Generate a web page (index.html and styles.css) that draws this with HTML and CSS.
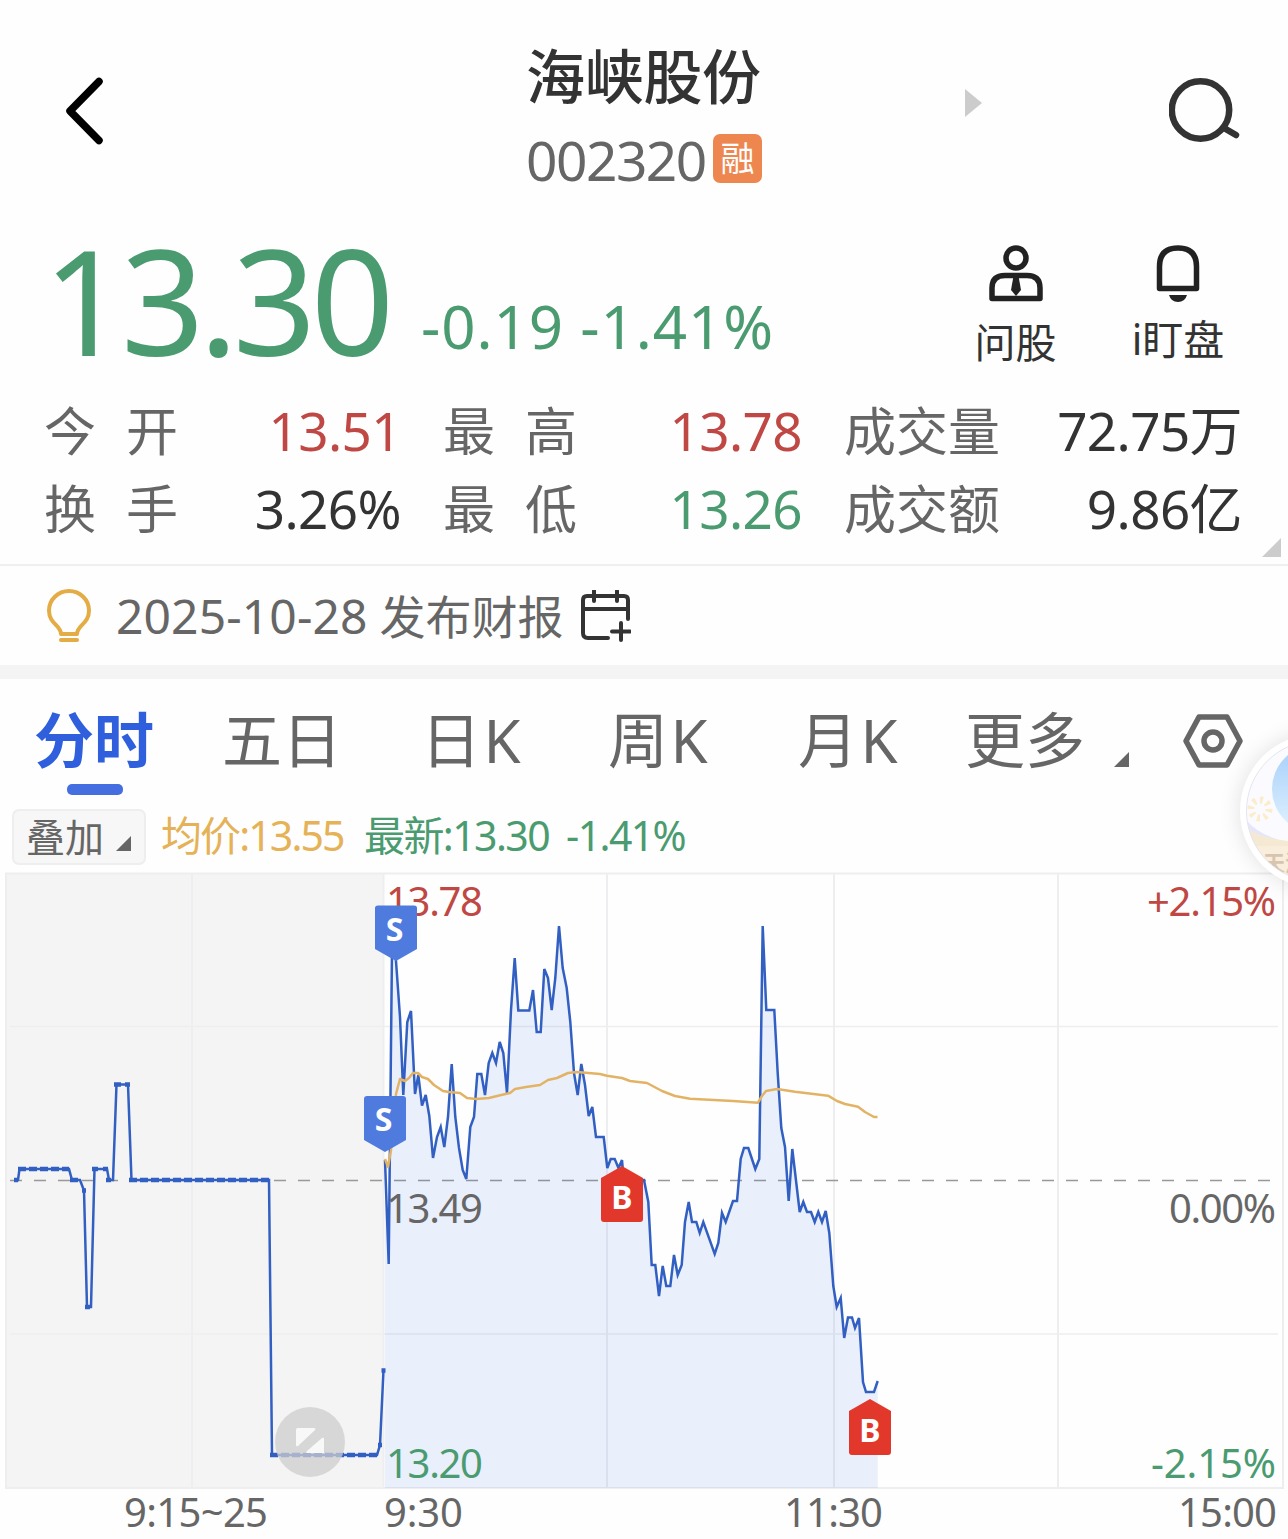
FILE: index.html
```html
<!DOCTYPE html>
<html lang="zh">
<head>
    <meta charset="UTF-8">
    <meta name="viewport" content="width=device-width, initial-scale=1.0">
    <title>海峡股份 002320</title>
    <link rel="stylesheet" href="styles.css">
</head>
<body>
    <!-- 顶部导航 -->
    <header class="header">
        <svg class="back" width="44" height="72" viewBox="0 0 44 72">
            <path d="M36 6.500 L7 36 L36 65.500"/>
        </svg>
        <div class="stock">
            <h1>海峡股份</h1>
            <div class="code"><span>002320</span><i class="badge">融</i></div>
        </div>
        <svg class="next" width="18" height="28" viewBox="0 0 18 28"><path d="M0 0 L17 14 L0 28 Z"/></svg>
        <svg class="search" width="72" height="66" viewBox="0 0 72 66">
            <circle cx="31.5" cy="32" r="28.7"/>
            <path d="M55 50 L67 57"/>
        </svg>
    </header>

    <!-- 价格 -->
    <section class="quote">
        <div class="price">13.30</div>
        <div class="change">-0.19 -1.41%</div>
        <div class="action ask">
            <svg width="54" height="58" viewBox="0 0 54 58">
                <circle cx="27" cy="13" r="10"/>
                <path d="M3 53.500 V43 Q3 30.500 16 30.500 H38 Q51 30.500 51 43 V53.500 Z"/>
                <path class="solid" d="M24.500 31 H29.500 L32 45 L27 51 L22 45 Z"/>
            </svg>
            <span>问股</span>
        </div>
        <div class="action watch">
            <svg width="46" height="58" viewBox="0 0 46 58">
                <path d="M4.500 43.500 V21.500 Q4.500 3 23 3 Q41.500 3 41.500 21.500 V43.500 Z"/>
                <path class="solid" d="M14 50 H32 Q30 57 23 57 Q16 57 14 50 Z"/>
            </svg>
            <span>i盯盘</span>
        </div>
    </section>

    <!-- 行情数据 -->
    <section class="stats">
        <div class="item"><span class="label wide">今开</span><span class="value up">13.51</span></div>
        <div class="item"><span class="label wide">最高</span><span class="value up">13.78</span></div>
        <div class="item"><span class="label">成交量</span><span class="value">72.75万</span></div>
        <div class="item"><span class="label wide">换手</span><span class="value">3.26%</span></div>
        <div class="item"><span class="label wide">最低</span><span class="value down">13.26</span></div>
        <div class="item"><span class="label">成交额</span><span class="value">9.86亿</span></div>
        <svg class="corner" width="19" height="19" viewBox="0 0 19 19"><path d="M19 0 V19 H0 Z"/></svg>
    </section>

    <!-- 公告 -->
    <section class="notice">
        <svg class="bulb" width="46" height="54" viewBox="0 0 46 54">
            <path d="M15 45 C15 36 3 35 3 21.500 A20 19.500 0 0 1 43 21.500 C43 35 31 36 31 45 Z"/>
            <path d="M15 51 H31"/>
        </svg>
        <span class="notice-text"><span class="date">2025-10-28</span> <span>发布财报</span></span>
        <svg class="calendar" width="50" height="52" viewBox="0 0 50 52">
            <path d="M47 29 V10 Q47 6 43 6 H6 Q2 6 2 10 V43 Q2 48 7 48 H27"/>
            <path d="M2 19 H47 M13 1 V11 M36 1 V11 M40 33 V50 M31 41.500 H49"/>
        </svg>
    </section>

    <!-- 周期标签 -->
    <nav class="tabs">
        <a class="active">分时</a>
        <a>五日</a>
        <a class="k">日K</a>
        <a class="k">周K</a>
        <a class="k">月K</a>
        <a>更多</a>
        <svg class="more" width="15" height="15" viewBox="0 0 15 15"><path d="M15 0 V15 H0 Z"/></svg>
        <svg class="setting" width="60" height="56" viewBox="0 0 60 56">
            <path d="M16 4 H44 L57 28 L44 52 H16 L3 28 Z"/>
            <circle cx="30" cy="28" r="9"/>
        </svg>
    </nav>

    <div class="legend">
        <button>叠加<svg width="15" height="15" viewBox="0 0 15 15"><path d="M15 0 V15 H0 Z"/></svg></button>
        <span class="avg">均价:13.55</span>
        <span class="latest">最新:13.30 -1.41%</span>
    </div>

    <!-- 分时图 -->
    <svg class="chart" width="1288" height="667" viewBox="0 872 1288 667">
        <rect class="pre" x="6" y="873" width="377" height="615"/>
        <g class="grid">
            <rect x="6" y="873.500" width="1277" height="614.500"/>
            <path d="M192 873 V1488 M383.500 873 V1488 M607 873 V1488 M834 873 V1488 M1058 873 V1488"/>
            <path class="thin" d="M10 1026.500 H1278 M10 1334 H1278"/>
        </g>
        <path class="base" d="M10 1180.500 H1274"/>

        <path id="area" class="area"/>
        <polyline class="line" points="14,1180 18,1180 19.500,1169 69,1169 72,1180 80,1180 84,1190.500 87,1307 91,1307 94.500,1169 107,1169 109,1180 113,1180 116.500,1084.500 128,1084.500 131.500,1180 269,1180 272,1455 377,1455 380,1445 383.500,1370"/>
        <path class="dots" d="M14 1180 H18 M18 1169 H69 M70 1180 H80 M82 1190.500 H86 M85 1307 H90 M92 1169 H98 M103 1169 H108 M106 1180 H111 M114 1084.500 H121 M125 1084.500 H130 M129 1180 H271 M270 1455 H377 M378 1445 H382 M381.500 1370.500 H385.500"/>
        <polyline id="price" class="line" points="385,1160 388.700,1264 392,950 395.700,957 400,1017 403.300,1095 407.300,1022 411,1011 415,1094 418.300,1075 422,1105.700 425.700,1095 429.300,1116 433,1158 437,1137 440.700,1127 444.300,1147 448,1117 451.700,1064 455.300,1117 459,1148 462.700,1170 466.300,1179 470.300,1127 474,1117 477.300,1074 481.300,1074 485,1095 488.700,1063 492.300,1053 496,1063 499.700,1042 503.300,1053 507,1093 511,1010 514.700,958 518.300,1010.500 529.300,1010.500 533,990 536.700,1032 540.700,1032 544.300,969 548,978 551.700,1010 555.300,978 559,926 562.700,968 566.700,988 570.300,1022 574,1073 577.700,1095 581.300,1064 585,1085 588.700,1116 592.300,1107 596,1137 603.700,1137 607.300,1168 610.700,1159 614.700,1159 618.500,1168 622,1160 625.500,1200 629,1221 633,1190 640,1180 644,1180 648.300,1202 651.700,1265 655.300,1265 659,1296 662.700,1266 666.300,1286 670.300,1286 674,1255 677.700,1275 681.700,1265 685,1222 688.700,1202 692,1222 696.300,1222 699.700,1233 703.300,1222 714.700,1254 718.300,1243 722,1213 725.700,1222 733,1201 737,1201 740.700,1159 744,1148 748.300,1148 755.300,1169 759.300,1159 762.700,926 766.300,1010 774.300,1010 777.700,1073 781.300,1128 785,1147 788.700,1201 792.300,1149 799.700,1212 803.300,1202 807,1212 811,1212 814.700,1222 818.300,1212 822,1222 825.700,1211 829.300,1233 833.300,1286 836.700,1307 840.700,1298 844.200,1338 848,1317.500 852,1317.500 855,1328 859,1318 863,1382 866,1392 874,1392 877.700,1381"/>
        <polyline class="avg-line" points="385,1159 388,1167 391,1150 396,1094 400,1079 405,1081 409,1078 413,1073 418,1073 422,1077 428,1079 434,1085 443,1091 449,1092 460,1093 467,1098 476,1099 489,1098 497,1096 510,1093 515,1089 526,1087 540,1085 548,1080 557,1078 568,1073 577,1072 600,1074 607,1075.700 615,1077 622,1078 630,1081 647,1083 662,1091 675,1096 690,1098.700 733,1101 758,1102.700 762,1096 766,1091 777,1089 795,1091.700 828,1095.700 837,1101 845,1104 858,1106.700 865,1112 874,1117 877.500,1117"/>

        <g class="axis">
            <text class="up" x="386" y="916" textLength="97">13.78</text>
            <text x="386" y="1223" textLength="97">13.49</text>
            <text class="down" x="386" y="1478" textLength="97">13.20</text>
            <text class="up" x="1147" y="916" textLength="129">+2.15%</text>
            <text x="1169" y="1223" textLength="107">0.00%</text>
            <text class="down" x="1151" y="1478" textLength="125">-2.15%</text>
            <text x="124" y="1527" textLength="144">9:15~25</text>
            <text x="384" y="1527" textLength="79">9:30</text>
            <text x="784" y="1527" textLength="99">11:30</text>
            <text x="1178" y="1527" textLength="99">15:00</text>
        </g>

        <!-- 买卖点 -->
        <g class="mark sell">
            <path d="M375 908 Q375 905.500 378 905.500 H414 Q417 905.500 417 908 V949 L396 961 L375 949 Z"/>
            <text x="394.500" y="941">S</text>
            <path d="M364 1099 Q364 1096 367 1096 H403 Q406 1096 406 1099 V1140 L385 1152 L364 1140 Z"/>
            <text x="383.500" y="1131">S</text>
        </g>
        <g class="mark buy">
            <path d="M601 1178 L622 1166 L643 1178 V1219 Q643 1222 640 1222 H604 Q601 1222 601 1219 Z"/>
            <text x="622" y="1209">B</text>
            <path d="M849 1411 L870 1399 L891 1411 V1452 Q891 1455 888 1455 H852 Q849 1455 849 1452 Z"/>
            <text x="870" y="1442">B</text>
        </g>

        <g class="expand">
            <circle class="disc" cx="310" cy="1442" r="35"/>
            <path class="arrows" d="M297.500 1428 H314 Q316 1428 315 1430 L298 1446 Q296 1447 296 1445 V1430 Q296 1428 297.500 1428 Z M324 1439 V1453 H308 Q305 1453 307 1451 L322 1438 Q324 1437 324 1439 Z"/>
        </g>
    </svg>

    <!-- 悬浮活动入口 -->
    <div class="float-wrap">
        <div class="float">
            <svg width="142" height="142" viewBox="0 0 142 142">
                <defs>
                    <linearGradient id="sky" x1="0" y1="0" x2="0" y2="1">
                        <stop offset="0" stop-color="#a5cffa"/>
                        <stop offset="1" stop-color="#e2f2fe"/>
                    </linearGradient>
                    <clipPath id="round"><circle cx="71" cy="71" r="70.500"/></clipPath>
                </defs>
                <g clip-path="url(#round)">
                    <rect width="142" height="142" fill="#fbfbff"/>
                    <path d="M0 80 Q16 98 44 102 V110 H0 Z" fill="#e6e6fb"/>
                    <path d="M0 87 Q16 101 60 102 V142 H0 Z" fill="#f6e9d3"/>
                    <path d="M4 106 H142 V142 H4 Z" fill="#f8eedb"/>
                    <circle cx="70" cy="49" r="44" fill="url(#sky)"/>
                    <circle class="sun" cx="14" cy="69" r="9"/>
                    <text x="17" y="131">天添</text>
                </g>
                <circle class="ring" cx="71" cy="71" r="70.500"/>
            </svg>
        </div>
    </div>

    <script>
        // 用价格线生成下方填充区域
        const line = document.getElementById("price").getAttribute("points").trim().split(/\s+/);
        document.getElementById("area").setAttribute("d", `M385 1488 L${line.join(" L")} L877.7 1488 Z`);
    </script>
</body>
</html>
```
FILE: styles.css
```css
* {
    box-sizing: border-box;
}
body {
    position: relative;
    width: 1288px;
    height: 1539px;
    margin: 0;
    overflow: hidden;
    font-family: "Noto Sans", "Noto Sans CJK SC", sans-serif;
    color: #333;
    background-color: #fefefe;
}
svg {
    display: block;
    flex: none;
}
.up {
    color: #bf4844;
    fill: #bf4844;
}
.down {
    color: #4a9b70;
    fill: #4a9b70;
}

/* 顶部导航 */
.header {
    display: grid;
    grid-template-columns: 527px 438px 204px 1fr;
    height: 210px;
}
.back {
    margin: 75px 0 0 63px;
    fill: none;
    stroke: #000;
    stroke-width: 7.500;
    stroke-linecap: round;
    stroke-linejoin: round;
}
.stock {
    padding-top: 36px;
}
.stock h1 {
    margin: 0 0 0 -1px;
    font-size: 59px;
    font-weight: 500;
    line-height: 80px;
    letter-spacing: -0.3px;
}
.code {
    display: flex;
    align-items: center;
    margin-top: 14px;
    color: #666;
    font-size: 55px;
    line-height: 60px;
    letter-spacing: -1.500px;
}
.code span {
    width: 185px;
    margin-left: -1px;
}
.badge {
    width: 49px;
    height: 49px;
    margin-left: 2px;
    margin-top: -3px;
    border-radius: 7px;
    background-color: #ee8650;
    color: #fff;
    font-size: 34px;
    font-style: normal;
    line-height: 49px;
    letter-spacing: 0;
    text-align: center;
}
.next {
    margin-top: 89px;
    fill: #ccc;
}
.search {
    margin-top: 78px;
    fill: none;
    stroke: #333;
    stroke-width: 6.500;
    stroke-linecap: round;
}

/* 价格 */
.quote {
    display: flex;
    height: 188px;
}
.price {
    width: 378px;
    margin-left: 43px;
    color: #4a9b70;
    font-size: 146px;
    line-height: 180px;
    letter-spacing: -5.500px;
}
.change {
    width: 534px;
    padding-top: 71px;
    color: #4a9b70;
    font-size: 60px;
    line-height: 90px;
    letter-spacing: 0.900px;
    white-space: pre;
}
.action {
    display: flex;
    flex-direction: column;
    align-items: center;
    padding-top: 35px;
    font-size: 41px;
    line-height: 50px;
}
.action svg {
    fill: none;
    stroke: #222;
    stroke-width: 5.500;
    stroke-linejoin: round;
}
.action .solid {
    fill: #222;
    stroke: none;
}
.ask {
    width: 121px;
}
.ask span {
    margin-top: 14px;
}
.watch {
    width: 204px;
}
.watch span {
    margin-top: 11px;
}

/* 行情数据 */
.stats {
    position: relative;
    display: grid;
    grid-template-columns: 357px 359px 398px;
    grid-auto-rows: 78px;
    column-gap: 42px;
    height: 174px;
    margin-top: -6px;
    padding-left: 44px;
    border-bottom: 2px solid #efefef;
    font-size: 53px;
    line-height: 78px;
    white-space: nowrap;
}
.item {
    display: flex;
    justify-content: space-between;
}
.label {
    color: #666;
    font-size: 52px;
}
.wide {
    letter-spacing: 30px;
}
.value {
    letter-spacing: -0.600px;
}
.corner {
    position: absolute;
    right: 7px;
    bottom: 7px;
    fill: #ccc;
}

/* 公告 */
.notice {
    display: flex;
    align-items: center;
    height: 113px;
    padding-left: 46px;
    border-bottom: 14px solid #f4f4f4;
    color: #666;
    font-size: 46px;
}
.bulb {
    fill: none;
    stroke: #e3ac45;
    stroke-width: 4;
    stroke-linecap: round;
    stroke-linejoin: round;
}
.notice-text {
    width: 465px;
    margin: -3px 0 0 24px;
    white-space: nowrap;
}
.date {
    font-size: 48px;
    letter-spacing: 0.100px;
}
.calendar {
    fill: none;
    stroke: #333;
    stroke-width: 4;
    stroke-linecap: round;
}

/* 周期标签 */
.tabs {
    display: grid;
    grid-template-columns: 188px 198px 187px 190px 168px 149px 69px 1fr;
    height: 126px;
    padding-left: 34px;
    color: #666;
    font-size: 60px;
    line-height: 122px;
}
.tabs a {
    white-space: nowrap;
}
.tabs .k {
    padding-left: 1px;
    letter-spacing: 2.500px;
}
.tabs .active {
    position: relative;
    color: #2f5fdc;
    font-weight: 700;
}
.tabs .active::after {
    content: "";
    position: absolute;
    left: 33px;
    top: 105px;
    width: 56px;
    height: 11px;
    border-radius: 5px;
    background-color: #456fe0;
}
.more {
    margin-top: 73px;
    fill: #666;
}
.setting {
    margin-top: 34px;
    fill: none;
    stroke: #666;
    stroke-width: 5.500;
    stroke-linejoin: round;
}

/* 图例 */
.legend {
    display: flex;
    height: 67px;
    padding: 4px 0 0 12px;
    font-size: 41px;
    line-height: 52px;
    white-space: pre;
}
.legend button {
    display: flex;
    width: 134px;
    height: 56px;
    padding: 0 0 0 12px;
    border: 2px solid #eee;
    border-radius: 7px;
    background-color: #f7f7f7;
    color: #666;
    font-family: inherit;
    font-size: 39px;
    line-height: 52px;
}
.legend button svg {
    margin: 25px 0 0 12px;
    fill: #666;
}
.avg {
    width: 203px;
    margin-left: 15px;
    color: #e5b257;
    letter-spacing: -1.900px;
}
.latest {
    color: #4a9b70;
    letter-spacing: -1.600px;
    word-spacing: 8px;
}

/* 分时图 */
.pre {
    fill: #f4f4f4;
}
.grid {
    fill: none;
    stroke: #eeeef0;
    stroke-width: 2;
}
.grid .thin {
    stroke-width: 1.500;
}
.base {
    stroke: #999;
    stroke-width: 1.300;
    stroke-dasharray: 12 12;
}
.area {
    fill: rgba(62, 104, 240, 0.1);
}
.line {
    fill: none;
    stroke: #325fc2;
    stroke-width: 2.500;
}
.dots {
    stroke: #325fc2;
    stroke-width: 4.500;
    stroke-dasharray: 8 3;
}
.avg-line {
    fill: none;
    stroke: #e3b365;
    stroke-width: 2.500;
    stroke-linejoin: round;
}
.axis {
    fill: #666;
    font-size: 40px;
}
.mark text {
    fill: #fff;
    font-size: 32px;
    font-weight: 700;
    text-anchor: middle;
}
.sell {
    fill: #4f7bde;
}
.buy {
    fill: #e2382c;
}
.disc {
    fill: rgba(205, 205, 205, 0.75);
}
.arrows {
    fill: #f8f8f8;
}

/* 悬浮入口 */
.float-wrap {
    position: absolute;
    top: 690px;
    right: 0;
    width: 88px;
    height: 240px;
    padding: 44px 0 0 40px;
    overflow: hidden;
}
.float {
    width: 154px;
    height: 154px;
    padding: 6px;
    border-radius: 50%;
    background-color: #fff;
    box-shadow: 0 0 22px rgba(0, 0, 0, 0.12);
}
.float text {
    fill: #d8c5b0;
    font-size: 22px;
    font-weight: 700;
}
.sun {
    fill: none;
    stroke: #fbeccb;
    stroke-width: 7;
    stroke-dasharray: 3 4;
}
.ring {
    fill: none;
    stroke: #e3e6ee;
    stroke-width: 1;
}
```
